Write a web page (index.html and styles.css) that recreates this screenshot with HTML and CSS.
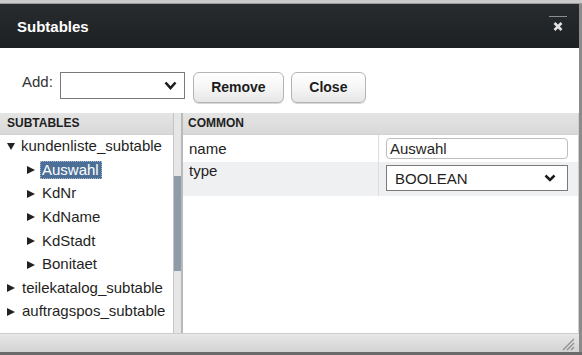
FILE: index.html
```html
<!DOCTYPE html>
<html lang="de">
<head>
    <meta charset="UTF-8">
    <title>Subtables</title>
    <link rel="stylesheet" href="styles.css">
</head>
<body>
    <div class="page-top"></div>

    <div class="dialog">
        <div class="titlebar">
            <span class="title">Subtables</span>
            <div class="close-btn">
                <svg width="10" height="9" viewBox="0 0 10 9">
                    <path d="M1.5 1 L8.5 8 M8.5 1 L1.5 8" stroke="#e2e2e2" stroke-width="2.6" fill="none"/>
                </svg>
            </div>
        </div>

        <div class="toolbar">
            <span class="add-label">Add:</span>
            <div class="select add-select">
                <svg class="chevron" width="13" height="9" viewBox="0 0 13 9">
                    <polyline points="1.5,1.5 6.5,7 11.5,1.5" stroke="#1c1c1c" stroke-width="2.6" fill="none"/>
                </svg>
            </div>
            <button class="btn btn-remove">Remove</button>
            <button class="btn btn-close">Close</button>
        </div>

        <div class="main">
            <div class="tree-panel">
                <div class="panel-head">SUBTABLES</div>
                <div class="tree">
                    <div class="node"><span class="twisty open"></span><span class="label">kundenliste_subtable</span></div>
                    <div class="node child"><span class="twisty"></span><span class="label selected">Auswahl</span></div>
                    <div class="node child"><span class="twisty"></span><span class="label">KdNr</span></div>
                    <div class="node child"><span class="twisty"></span><span class="label">KdName</span></div>
                    <div class="node child"><span class="twisty"></span><span class="label">KdStadt</span></div>
                    <div class="node child"><span class="twisty"></span><span class="label">Bonitaet</span></div>
                    <div class="node"><span class="twisty"></span><span class="label">teilekatalog_subtable</span></div>
                    <div class="node"><span class="twisty"></span><span class="label">auftragspos_subtable</span></div>
                </div>
            </div>

            <div class="vscroll"><div class="thumb"></div></div>

            <div class="props">
                <div class="panel-head props-head">COMMON</div>
                <div class="prop-grid">
                    <div class="prop-name">name</div>
                    <div class="prop-value">
                        <div class="text-input">Auswahl</div>
                    </div>
                    <div class="prop-name alt top">type</div>
                    <div class="prop-value alt">
                        <div class="select type-select">
                            <span>BOOLEAN</span>
                            <svg class="chevron" width="12" height="8" viewBox="0 0 12 8">
                                <polyline points="1.5,1.5 6,6 10.5,1.5" stroke="#1c1c1c" stroke-width="2.5" fill="none"/>
                            </svg>
                        </div>
                    </div>
                </div>
            </div>
        </div>

        <div class="statusbar">
            <svg class="grip" width="13" height="13" viewBox="0 0 13 13">
                <path d="M1 12 L12 1 M5 12 L12 5 M9 12 L12 9" stroke="#8e8e8e" stroke-width="1.2" fill="none"/>
            </svg>
        </div>
    </div>

    <div class="page-bottom"></div>
</body>
</html>
```

FILE: styles.css
```css
* {
    margin: 0;
    padding: 0;
    box-sizing: border-box;
}

body {
    width: 582px;
    height: 355px;
    overflow: hidden;
    background: #8b8b8b;
    font-family: "Liberation Sans", Arial, sans-serif;
    color: #222;
}

.page-top {
    height: 4px;
    background: #cbcbcb;
    border-bottom: 1px solid #9c9c9c;
}

.page-bottom {
    height: 3px;
    background: #6a6a6a;
}

.dialog {
    width: 579px;
    background: #fff;
}

/* title bar */
.titlebar {
    height: 44px;
    display: flex;
    align-items: center;
    padding-left: 17px;
    background: linear-gradient(#282c2f, #1d2023);
    color: #fff;
}

.title {
    font-size: 15px;
    font-weight: bold;
}

.close-btn {
    margin-left: auto;
    margin-right: 12px;
    align-self: flex-start;
    margin-top: 12px;
    width: 18px;
    height: 16px;
    border-top: 1px solid #8d8d8d;
    padding-top: 5px;
    display: flex;
    justify-content: center;
    align-items: flex-start;
}

.close-btn svg {
    display: block;
}

/* toolbar */
.toolbar {
    height: 65px;
    padding: 24px 0 0 22px;
    display: flex;
    align-items: flex-start;
}

.add-label {
    font-size: 15px;
    line-height: 17px;
    margin-top: 1px;
    color: #333;
}

.select {
    background: #fff;
    border: 1px solid #7a7a7a;
    display: flex;
    align-items: center;
}

.add-select {
    width: 125px;
    height: 27px;
    margin-left: 7px;
    justify-content: flex-end;
    padding-right: 7px;
}

.chevron {
    display: block;
}

.btn {
    height: 31px;
    border: 1px solid #b4b4b4;
    border-radius: 6px;
    background: linear-gradient(#ffffff 0%, #f6f6f6 50%, #e6e6e6 100%);
    box-shadow: 0 1px 0 #d8d8d8;
    font-family: inherit;
    font-size: 14px;
    font-weight: bold;
    color: #1c1c1c;
    padding-bottom: 2px;
}

.btn-remove {
    width: 91px;
    margin-left: 8px;
}

.btn-close {
    width: 75px;
    margin-left: 7px;
}

/* split area */
.main {
    height: 220px;
    display: flex;
    border-right: 1px solid #cfcfcf;
}

.panel-head {
    height: 22px;
    line-height: 20px;
    padding-left: 7px;
    font-size: 12px;
    font-weight: bold;
    color: #1e1e1e;
    background: linear-gradient(#e4e4e4, #d9d9d9);
    border-bottom: 1px solid #d2d2d2;
}

.tree-panel {
    width: 173px;
}

.tree {
    font-size: 15px;
}

.node {
    height: 23.57px;
    display: flex;
    align-items: center;
    padding-left: 7px;
    white-space: nowrap;
}

.node.child {
    padding-left: 27px;
}

.twisty {
    width: 0;
    height: 0;
    border-left: 8px solid #222;
    border-top: 4px solid transparent;
    border-bottom: 4px solid transparent;
    margin-right: 5px;
}

.twisty.open {
    border-left: 4.5px solid transparent;
    border-right: 4.5px solid transparent;
    border-top: 7px solid #222;
    border-bottom: 0;
    margin: 0 4.5px 0 -0.5px;
}

.label {
    line-height: 18px;
    padding: 0 2px;
    margin-bottom: 1px;
    color: #1f1f24;
}

.label.selected {
    padding: 0 3px 0 2px;
    background: #4b6f96;
    color: #fff;
    outline: 1px dotted #a8bacd;
    outline-offset: -1px;
}

.vscroll {
    width: 10px;
    background: #e6e6e6;
    border-left: 1px solid #c4c4c4;
    border-right: 2px solid #b9b9b9;
    padding-top: 63px;
}

.thumb {
    height: 95px;
    background: #8e9ca9;
}

/* property grid */
.props {
    flex: 1;
}

.props-head {
    padding-left: 5px;
}

.prop-grid {
    display: grid;
    grid-template-columns: 196px 1fr;
    grid-template-rows: 27px 34px;
    font-size: 15px;
}

.prop-name {
    padding-left: 6px;
    display: flex;
    align-items: center;
    border-right: 1px solid #dedede;
}

.prop-name.top {
    align-items: flex-start;
    line-height: 17px;
}

.prop-value {
    padding: 3px 10px 0 7px;
}

.alt {
    background: #eff0f1;
}

.text-input {
    height: 21px;
    border: 1px solid #bdbdbd;
    border-radius: 4px;
    background: #fff;
    padding-left: 3px;
    line-height: 19px;
    color: #1f1f24;
}

.type-select {
    height: 26px;
    width: 182px;
    padding: 0 11px 0 8px;
    justify-content: space-between;
    color: #1f1f24;
}

/* bottom bar */
.statusbar {
    height: 19px;
    border-top: 1px solid #cdcdcd;
    background: linear-gradient(#e7e7e7, #d3d3d3);
    display: flex;
    justify-content: flex-end;
    align-items: flex-end;
    padding: 0 4px 1px 0;
}

.grip {
    display: block;
}
```
